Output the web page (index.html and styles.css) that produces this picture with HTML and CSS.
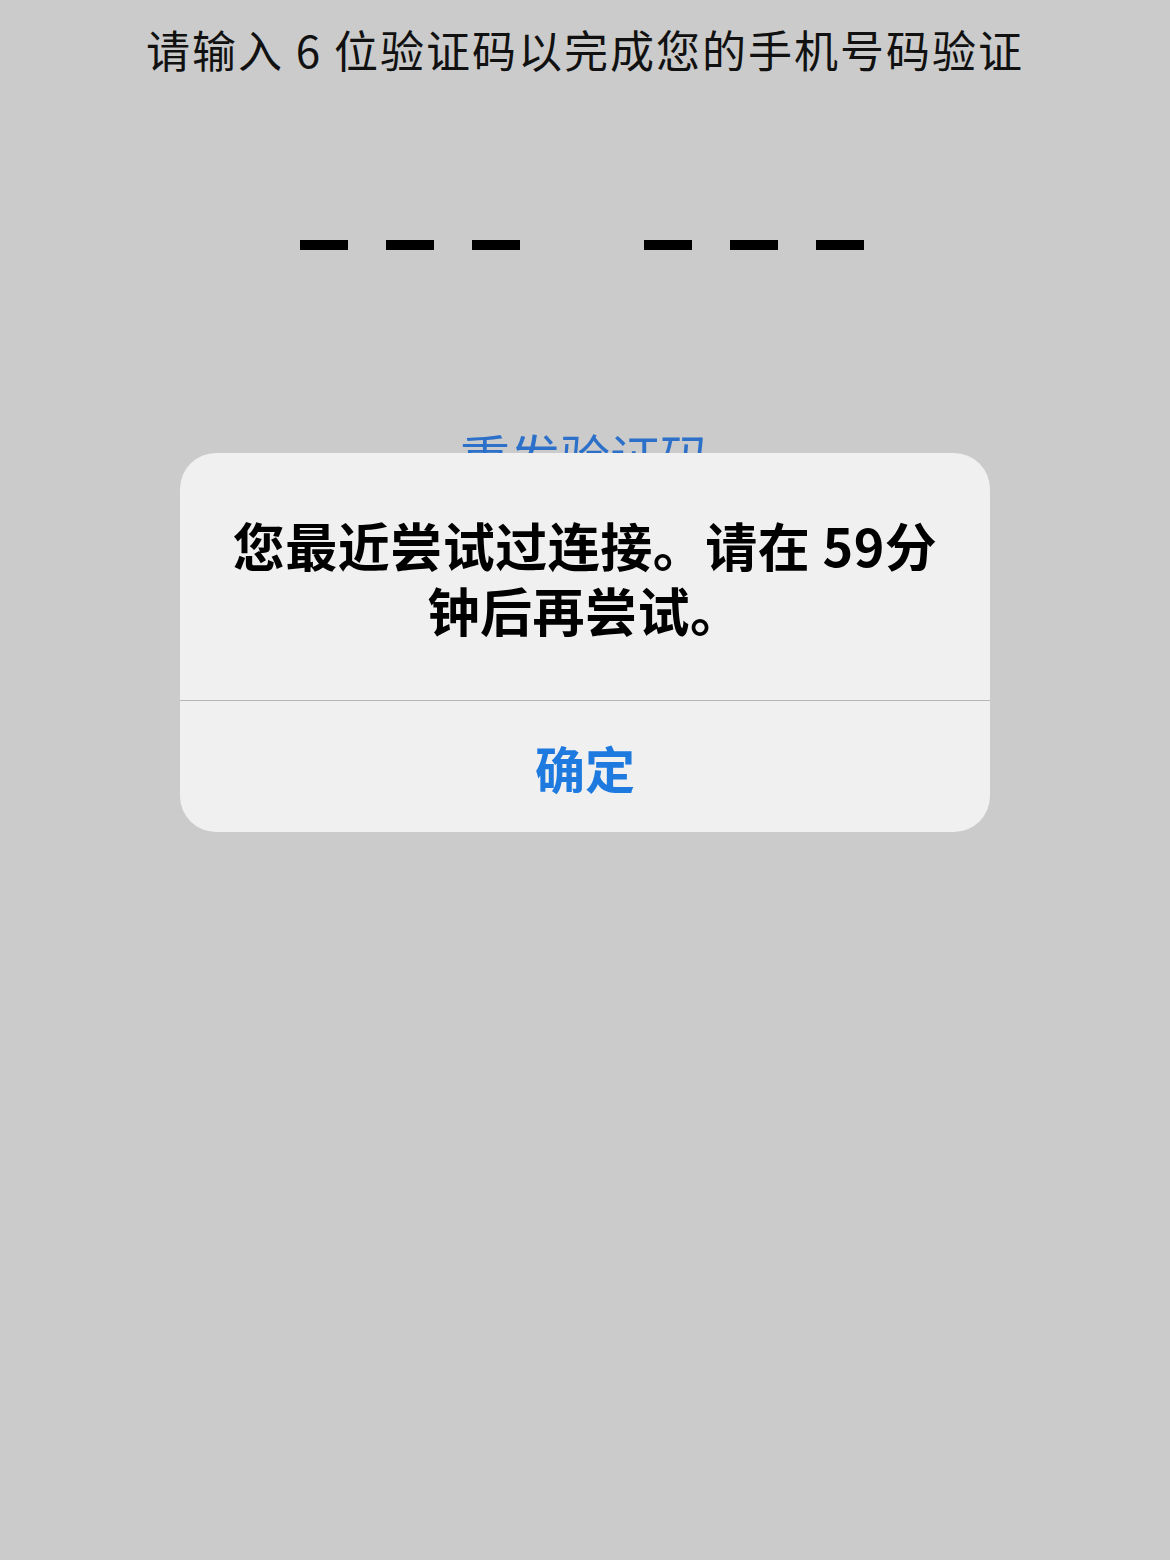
FILE: index.html
```html
<!DOCTYPE html>
<html>
<head>
<title>验证手机号码</title>
<meta charset="utf-8">
<link rel="stylesheet" href="styles.css">
</head>
<body>
  <div id="page">
    <div class="title">请输入 6 位验证码以完成您的手机号码验证</div>

    <div class="codeRow">
      <div class="codeGroup">
        <span class="dash"></span><span class="dash"></span><span class="dash"></span>
      </div>
      <div class="codeGroup">
        <span class="dash"></span><span class="dash"></span><span class="dash"></span>
      </div>
    </div>

    <div class="resend">重发验证码</div>
  </div>

  <div id="alertBox">
    <div class="alertMsg">您最近尝试过连接。请在 59分钟后再尝试。</div>
    <div class="alertBtn">确定</div>
  </div>
</body>
</html>
```

FILE: styles.css
```css
body {margin: 0; background-color: #cbcbcb;
      font-family: "Noto Sans CJK SC", "Noto Sans", sans-serif;
}
#page {display: flex; flex-direction: column; align-items: center;
       min-height: 1560px;
}
.title {padding-top: 23px; font-size: 44px; line-height: 52px; letter-spacing: 2px; color: #111;}

.codeRow {display: flex; gap: 124px; margin-top: 165px; margin-left: -6px;}
.codeGroup {display: flex; gap: 38px;}
.dash {display: block; width: 48px; height: 10px; background-color: #000;}

.resend {margin-top: 175px; font-size: 50px; line-height: 60px; color: #2c70c9;}

#alertBox {width: 810px; height: 379px;
           position: absolute; top: 453px; left: 180px;
           display: flex; flex-direction: column;
           background-color: #f0f0f0; border-radius: 36px;
           overflow: hidden;
}
.alertMsg {height: 247px; padding: 0 45px;
           display: flex; align-items: center; justify-content: center;
           text-align: center; font-size: 52px; line-height: 65px;
           font-weight: 700; letter-spacing: 0.5px; color: #000;
           border-bottom: 1px solid #b6b6b6;
}
.alertBtn {flex: 1; display: flex; align-items: center; justify-content: center;
           font-size: 50px; font-weight: 700; color: #1f7ae0;
}
```
